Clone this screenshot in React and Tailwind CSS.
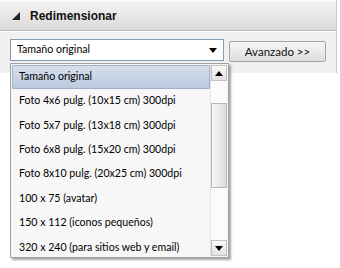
import React from "react";

const options = [
  "Tamaño original",
  "Foto 4x6 pulg. (10x15 cm) 300dpi",
  "Foto 5x7 pulg. (13x18 cm) 300dpi",
  "Foto 6x8 pulg. (15x20 cm) 300dpi",
  "Foto 8x10 pulg. (20x25 cm) 300dpi",
  "100 x 75 (avatar)",
  "150 x 112 (iconos pequeños)",
  "320 x 240 (para sitios web y email)",
];

function Arrow({ up }) {
  return (
    <svg width="8" height="5" viewBox="0 0 8 5">
      <path d={up ? "M0 5 L4 0 L8 5 Z" : "M0 0 L8 0 L4 5 Z"} fill="#000" />
    </svg>
  );
}

export default function App() {
  return (
    <div
      className="relative w-[340px] h-[268px] bg-white overflow-hidden text-[10.6px] text-black"
      style={{ fontFamily: 'Lato, "Liberation Sans", Arial, sans-serif' }}
    >
      {/* Panel */}
      <div className="w-[337px] border-r border-[#c9c9c9]">
        {/* Header */}
        <div className="h-[31px] flex items-center border-t border-white border-b border-b-[#b9b9b9] bg-gradient-to-b from-[#f4f4f4] to-[#dadada]">
          <svg width="8" height="8" viewBox="0 0 8 8" className="ml-[12px]">
            <path d="M8 0 L8 8 L0 8 Z" fill="#222" />
          </svg>
          <span
            className="ml-[10px] font-bold text-[12px] text-[#111]"
            style={{ fontFamily: '"Liberation Sans", Arial, sans-serif' }}
          >
            Redimensionar
          </span>
        </div>

        {/* Body */}
        <div className="h-[42px] bg-[#f0f0f0] border-t border-white flex items-start pt-[7px] px-[10px] gap-[5px]">
          <div className="w-[214px] h-[22px] bg-white border border-[#7f9db9] flex items-center justify-between pl-[6px] pr-[6px]">
            <span>Tamaño original</span>
            <Arrow />
          </div>
          <button className="mt-[2px] w-[97px] h-[21px] rounded-[2px] border border-[#a5a5a5] bg-gradient-to-b from-[#f6f6f6] to-[#dedede] text-[11.5px] text-[#111]">
            Avanzado &gt;&gt;
          </button>
        </div>
      </div>

      {/* Dropdown list */}
      <div className="absolute left-[10px] top-[63px] w-[219px] h-[195px] bg-[#f7f7f7] border border-[#a0a0a0] flex shadow-[2px_2px_2px_rgba(0,0,0,0.35)]">
        <div className="flex-1 flex flex-col pt-[1px] pl-[1px]">
          {options.map((o, i) => (
            <div
              key={o}
              className={
                i === 0
                  ? "h-[24px] shrink-0 flex items-center pl-[6px] border border-[#9fb0c8] rounded-[1px] bg-gradient-to-b from-[#d6dfee] to-[#bcc9de]"
                  : "h-[24.4px] shrink-0 flex items-center pl-[7px]"
              }
            >
              {o}
            </div>
          ))}
        </div>
        {/* Scrollbar */}
        <div className="w-[17px] my-[1px] mr-[1px] flex flex-col bg-[#fbfbfb] border-l border-[#e4e4e4]">
          <div className="h-[16px] flex items-center justify-center border border-[#c2c2c2] bg-gradient-to-b from-[#fafafa] to-[#e2e2e2]">
            <Arrow up />
          </div>
          <div className="h-[22px]" />
          <div className="h-[85px] border border-[#b8b8b8] bg-gradient-to-r from-[#f8f8f8] to-[#dcdcdc]" />
          <div className="flex-1" />
          <div className="h-[16px] flex items-center justify-center border border-[#c2c2c2] bg-gradient-to-b from-[#fafafa] to-[#e2e2e2]">
            <Arrow />
          </div>
        </div>
      </div>
    </div>
  );
}
